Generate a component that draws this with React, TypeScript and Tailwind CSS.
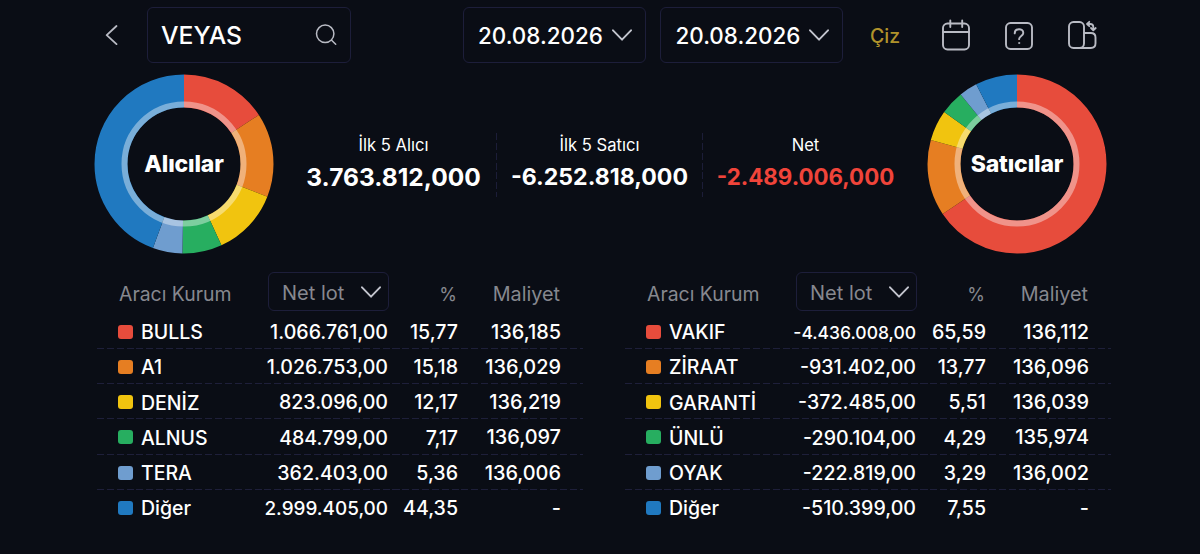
type Row = { name: string; lot: string; pct: string; cost: string; size?: string };

const colors = ["#e74c3c", "#e67e22", "#f1c40f", "#27ae60", "#6f9dcf", "#2079c0"];

const swatches = [
  "bg-[#e74c3c]",
  "bg-[#e67e22]",
  "bg-[#f1c40f]",
  "bg-[#27ae60]",
  "bg-[#6f9dcf]",
  "bg-[#2079c0]",
];

const buyers: Row[] = [
  { name: "BULLS", lot: "1.066.761,00", pct: "15,77", cost: "136,185" },
  { name: "A1", lot: "1.026.753,00", pct: "15,18", cost: "136,029" },
  { name: "DENİZ", lot: "823.096,00", pct: "12,17", cost: "136,219" },
  { name: "ALNUS", lot: "484.799,00", pct: "7,17", cost: "136,097" },
  { name: "TERA", lot: "362.403,00", pct: "5,36", cost: "136,006" },
  { name: "Diğer", lot: "2.999.405,00", pct: "44,35", cost: "-", size: "text-[18.9px]" },
];

const sellers: Row[] = [
  { name: "VAKIF", lot: "-4.436.008,00", pct: "65,59", cost: "136,112", size: "text-[17.5px]" },
  { name: "ZİRAAT", lot: "-931.402,00", pct: "13,77", cost: "136,096" },
  { name: "GARANTİ", lot: "-372.485,00", pct: "5,51", cost: "136,039" },
  { name: "ÜNLÜ", lot: "-290.104,00", pct: "4,29", cost: "135,974" },
  { name: "OYAK", lot: "-222.819,00", pct: "3,29", cost: "136,002" },
  { name: "Diğer", lot: "-510.399,00", pct: "7,55", cost: "-" },
];

const totals = [
  { label: "İlk 5 Alıcı", value: "3.763.812,000", tone: "text-[24.5px] text-white" },
  { label: "İlk 5 Satıcı", value: "-6.252.818,000", tone: "text-[23.1px] text-white" },
  { label: "Net", value: "-2.489.006,000", tone: "text-[22.3px] text-[#f0443a]" },
];

function Chevron() {
  return (
    <svg className="h-3 w-5 shrink-0" viewBox="0 0 20 12" fill="none" stroke="#c3c5ce" strokeWidth="1.9" strokeLinecap="round" strokeLinejoin="round">
      <path d="M1 1.3 L10 10.7 L19 1.3" />
    </svg>
  );
}

function DateSelect({ value }: { value: string }) {
  return (
    <button className="flex h-14 w-[183px] items-center justify-between rounded-md border border-[#1d1e3a] pr-[13px] pl-[14.5px] text-[22.4px] font-[450] text-white">
      <span className="pt-[2px]">{value}</span>
      <Chevron />
    </button>
  );
}

function Donut({ title, rows }: { title: string; rows: Row[] }) {
  const parts = rows.map((r) => parseFloat(r.pct.replace(",", ".")));
  const sum = parts.reduce((a, b) => a + b, 0);
  let start = 0;
  return (
    <div className="relative h-[180px] w-[180px] shrink-0">
      <svg className="h-full w-full -rotate-90" viewBox="0 0 180 180" fill="none">
        {parts.map((p, i) => {
          const len = (p / sum) * 100;
          const offset = -start;
          start += len;
          return (
            <circle key={i} cx="90" cy="90" r="73" stroke={colors[i]} strokeWidth="33" pathLength="100" strokeDasharray={`${len} ${100 - len}`} strokeDashoffset={offset} />
          );
        })}
        <circle cx="90" cy="90" r="59.5" stroke="#ffffff" strokeOpacity="0.4" strokeWidth="6" />
      </svg>
      <span className="absolute inset-0 flex items-center justify-center text-[23px] font-extrabold tracking-[-0.15px] text-white">{title}</span>
    </div>
  );
}

function BrokerTable({ rows }: { rows: Row[] }) {
  return (
    <div className="w-[486px]">
      <div className="grid h-[41.5px] grid-cols-[171px_121px_68px_103px] text-[19.4px] text-[#86888f]">
        <span className="pt-[8px] pl-[22px]">Aracı Kurum</span>
        <button className="flex h-[39px] items-center justify-between rounded-md border border-[#1d1e3a] pr-[7px] pl-[13px] text-[20px]">
          <span className="pt-[2px]">Net lot</span>
          <Chevron />
        </button>
        <span className="pt-[9px] text-right text-[18px]">%</span>
        <span className="pt-[8px] text-right text-[19.8px]">Maliyet</span>
      </div>
      {rows.map((r, i) => (
        <div key={r.name}>
          <div className="grid h-[34.25px] grid-cols-[140px_151px_70px_103px] items-center pt-[4px] text-[19.6px] font-[450] text-white">
            <span className="flex items-center gap-[8px] pl-[21px] text-[19.5px] whitespace-nowrap">
              <i className={`mb-[2px] h-[14px] w-[15px] shrink-0 rounded-[3px] ${swatches[i]}`} />
              {r.name}
            </span>
            <span className={`text-right ${r.size ?? ""}`}>{r.lot}</span>
            <span className="text-right">{r.pct}</span>
            <span className="text-right text-[19.9px]">{r.cost}</span>
          </div>
          {i < rows.length - 1 && (
            <div className="h-px bg-[repeating-linear-gradient(90deg,#1e1f3a_0_7px,transparent_7px_9.85px)]" />
          )}
        </div>
      ))}
    </div>
  );
}

export default function App() {
  return (
    <main className="h-[554px] w-[1200px] overflow-hidden bg-[#0a0d15] font-['Inter',sans-serif]">
      <header className="flex h-[70px] items-center pl-[105px]">
        <svg className="h-5 w-3.5" viewBox="0 0 14 20" fill="none" stroke="#b9bbc4" strokeWidth="1.8" strokeLinecap="round" strokeLinejoin="round">
          <path d="M11.5 1 L1.7 10.2 L11.5 19.2" />
        </svg>
        <div className="ml-[28px] flex h-14 w-[204px] items-center justify-between rounded-md border border-[#1d1e3a] pr-[13px] pl-[13px] text-[24.7px] font-[450] text-white">
          <span className="pt-[2px]">VEYAS</span>
          <svg className="h-[22px] w-[22px]" viewBox="0 0 22 22" fill="none" stroke="#b9bbc4" strokeWidth="1.5" strokeLinecap="round">
            <circle cx="10.2" cy="9.8" r="8.7" />
            <path d="M16.6 16.2 L20.7 20.3" />
          </svg>
        </div>
        <div className="ml-[111.5px] flex gap-[14.5px]">
          <DateSelect value="20.08.2026" />
          <DateSelect value="20.08.2026" />
        </div>
        <span className="ml-[27px] w-[44px] pt-[3px] text-[19.5px] font-[450] text-[#b0922b]">Çiz</span>
        <svg className="ml-[27.5px] h-8 w-7" viewBox="0 0 28 32" fill="none" stroke="#b9bbc4" strokeWidth="1.9" strokeLinecap="round">
          <rect x="1" y="4.5" width="26" height="26" rx="4.5" />
          <path d="M1 13 H27 M8.3 1.5 V8 M20.2 1.5 V8" />
        </svg>
        <svg className="mt-px ml-[35.5px] h-7 w-7" viewBox="0 0 28 28" fill="none" stroke="#b9bbc4" strokeWidth="1.9" strokeLinecap="round">
          <rect x="1" y="1" width="26" height="26" rx="4.5" />
          <path d="M9.7 11.4 C9.7 5.9 18.3 5.9 18.3 10.9 C18.3 14 14.2 13.9 14.1 17.1" />
          <circle cx="14.1" cy="21" r="0.6" fill="#b9bbc4" strokeWidth="0.8" />
        </svg>
        <svg className="ml-[35px] h-[30px] w-[30px]" viewBox="0 0 30 30" fill="none" stroke="#b9bbc4" strokeWidth="1.9" strokeLinecap="round" strokeLinejoin="round">
          <rect x="1" y="2" width="15" height="26" rx="4.5" />
          <path d="M16.3 13 H22.8 Q27.5 13 27.5 17.5 V23.3 Q27.5 28 22.8 28 H12" />
          <path d="M21.3 1.8 L19 4 L21.3 6.2 M19.3 4 H22.2 Q25.3 4 25.3 7 V9.6 M23 8 L25.3 10.3 L27.7 8" strokeWidth="1.8" />
        </svg>
      </header>

      <section className="flex h-[202px] items-start pt-[4px] pr-[93px] pl-[94px]">
        <Donut title="Alıcılar" rows={buyers} />
        <div className="mt-[59px] ml-[17px] flex">
          {totals.map((t, i) => (
            <div key={t.label} className="flex">
              {i > 0 && <div className="h-[64px] w-px bg-[repeating-linear-gradient(180deg,#1c1d38_0_7px,transparent_7px_9.85px)]" />}
              <div className="flex h-[64px] w-[205px] flex-col items-center text-white">
                <span className="text-[16.6px] leading-[24px]">{t.label}</span>
                <span className={`mt-[4px] leading-[32px] font-[650] whitespace-nowrap ${t.tone}`}>{t.value}</span>
              </div>
            </div>
          ))}
        </div>
        <div className="ml-auto">
          <Donut title="Satıcılar" rows={sellers} />
        </div>
      </section>

      <section className="flex gap-[42px] pl-[97px]">
        <BrokerTable rows={buyers} />
        <BrokerTable rows={sellers} />
      </section>
    </main>
  );
}
